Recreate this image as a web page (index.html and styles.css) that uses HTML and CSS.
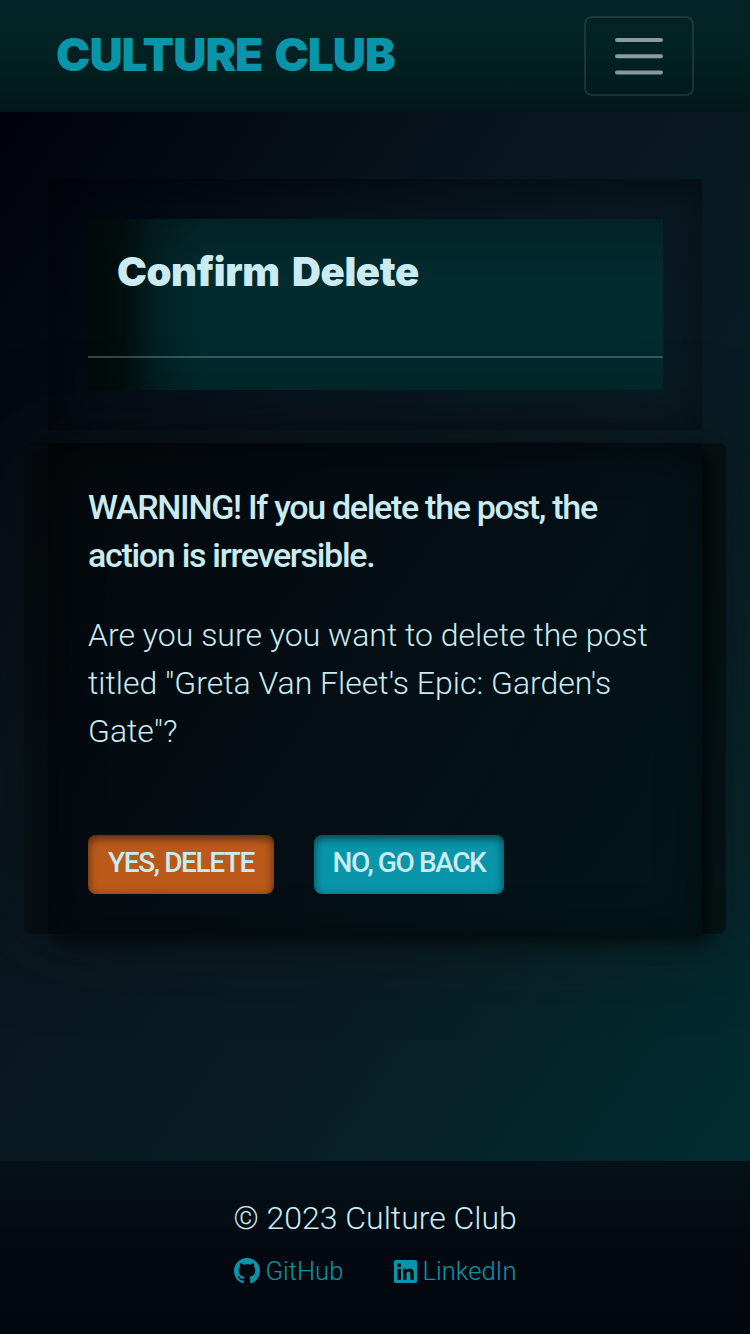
FILE: index.html
```html
<!DOCTYPE html>
<html lang="en">
<head>
<meta charset="utf-8">
<title>Culture Club</title>
<link rel="stylesheet" href="styles.css">
</head>
<body>
<header class="navbar">
  <a class="brand">CULTURE CLUB</a>
  <button class="toggler" aria-label="Toggle navigation">
    <svg width="60" height="60" viewBox="0 0 30 30"><path stroke="rgba(255,255,255,.55)" stroke-linecap="round" stroke-width="2" d="M4 7h22M4 15.100h22M4 23.200h22"/></svg>
  </button>
</header>
<main class="main">
  <section class="masthead">
    <div class="masthead-inner">
      <h1 class="title">Confirm Delete</h1>
      <hr class="rule">
    </div>
  </section>
  <section class="card">
    <div class="card-body">
      <p class="warning">WARNING! If you delete the post, the<br>action is irreversible.</p>
      <p class="question">Are you sure you want to delete the post titled "Greta Van Fleet's Epic: Garden's Gate"?</p>
      <div class="actions">
        <button class="btn btn-delete">YES, DELETE</button>
        <button class="btn btn-back">NO, GO BACK</button>
      </div>
    </div>
  </section>
</main>
<footer class="footer">
  <p class="copyright">© 2023 Culture Club</p>
  <div class="links">
    <a class="link"><svg class="github" viewBox="0 0 16 16"><path d="M8 0C3.58 0 0 3.58 0 8c0 3.54 2.29 6.53 5.47 7.59.4.07.55-.17.55-.38 0-.19-.01-.82-.01-1.49-2.01.37-2.53-.49-2.69-.94-.09-.23-.48-.94-.82-1.13-.28-.15-.68-.52-.01-.53.63-.01 1.08.58 1.23.82.72 1.21 1.87.87 2.33.66.07-.52.28-.87.51-1.07-1.78-.2-3.64-.89-3.64-3.95 0-.87.31-1.59.82-2.15-.08-.2-.36-1.02.08-2.12 0 0 .67-.21 2.2.82A7.6 7.6 0 0 1 8 3.86c.68 0 1.36.09 2 .27 1.53-1.04 2.2-.82 2.2-.82.44 1.1.16 1.92.08 2.12.51.56.82 1.27.82 2.15 0 3.07-1.87 3.75-3.65 3.95.29.25.54.73.54 1.48 0 1.07-.01 1.93-.01 2.2 0 .21.15.46.55.38A8.01 8.01 0 0 0 16 8c0-4.42-3.58-8-8-8z"/></svg><span>GitHub</span></a>
    <a class="link"><svg class="linkedin" viewBox="0 0 448 448"><path d="M416 0H31.900C14.300 0 0 14.500 0 32.300v383.400C0 433.500 14.300 448 31.900 448H416c17.600 0 32-14.500 32-32.300V32.300C448 14.500 433.600 0 416 0zM135.400 384H69V170.200h66.500V384zm-33.200-243a38.500 38.500 0 1 1 0-77 38.500 38.500 0 0 1 0 77zm282.100 243h-66.400V280c0-24.800-.5-56.700-34.500-56.700-34.600 0-39.900 27-39.900 54.900V384h-66.400V170.200h63.700v29.200h.9c8.900-16.800 30.600-34.500 62.900-34.500 67.200 0 79.700 44.300 79.700 101.900V384z"/></svg><span>LinkedIn</span></a>
  </div>
</footer>
</body>
</html>
```
FILE: styles.css
```css
* { box-sizing: border-box; }
body {
  margin: 0;
  min-height: 1334px;
  display: flex;
  flex-direction: column;
  font: 300 32px/48px Roboto, sans-serif;
  color: #caebf2;
  background: linear-gradient(125deg, #00000a 3%, #08151e 35%, #091c24 62%, #022c30 90%);
}
.navbar {
  height: 112px;
  padding: 16px 56px;
  display: flex;
  justify-content: space-between;
  align-items: flex-start;
  background: linear-gradient(#032427, #022122 50%, #021719);
}
.brand {
  font: 900 46px/76px Inter, sans-serif;
  letter-spacing: -1px;
  word-spacing: 4px;
  color: #0995a9;
  white-space: nowrap;
}
.toggler {
  width: 110px;
  height: 80px;
  padding: 0;
  display: flex;
  align-items: center;
  justify-content: center;
  border: 2px solid rgba(255, 255, 255, .1);
  border-radius: 8px;
  background: none;
}
.main { flex: 1; padding-top: 67px; }
.masthead {
  height: 251px;
  margin: 0 48px;
  padding: 40px;
  box-shadow: inset 4px 4px 48px rgba(0, 0, 0, .5);
}
.masthead-inner {
  width: 575px;
  height: 171px;
  background:
    linear-gradient(90deg, #020a0a, rgba(2, 10, 10, .9) 6%, rgba(2, 10, 10, .3) 12%, rgba(2, 10, 10, 0) 20%),
    linear-gradient(#032225, #022b2f 35%, #022b2f 75%, #02272a);
}
.title {
  height: 137px;
  margin: 0;
  padding: 29px 29px;
  font: 900 40px/48px Inter, sans-serif;
  letter-spacing: -.4px;
  word-spacing: 5px;
  white-space: nowrap;
}
.rule { margin: 0; border: 0; height: 2px; background: rgba(202, 235, 242, .25); }
.card {
  margin: 13px 24px 0;
  padding: 0 24px;
  height: 491px;
  border-radius: 8px;
  background: rgba(7, 8, 9, .6);
  box-shadow: 0 0 96px rgba(20, 18, 16, .45);
}
.card-body {
  height: 491px;
  padding: 40px;
  background: linear-gradient(125deg, #04080c, #040e14 50%, #02171a);
  box-shadow: 8px 8px 16px rgba(0, 0, 0, .6), inset 4px 4px 48px rgba(0, 0, 0, .45);
}
.warning {
  margin: 0 0 32px;
  font-size: 34px;
  font-weight: 500;
  letter-spacing: -1.3px;
  white-space: nowrap;
}
.question { margin: 0 -8px 80px 0; }
.actions { display: flex; gap: 40px; }
.btn {
  height: 59px;
  padding: 0 0 3px;
  border: 0;
  border-radius: 8px;
  font: 500 28px/56px Roboto, sans-serif;
  letter-spacing: -1.4px;
  color: #caebf2;
  white-space: nowrap;
  box-shadow: inset 0 3px 10px rgba(0, 0, 0, .6);
}
.btn-delete { width: 186px; background: #bb591b; }
.btn-back { width: 190px; background: #0995a9; }
.footer {
  height: 173px;
  padding-top: 33px;
  display: flex;
  flex-direction: column;
  align-items: center;
  background: linear-gradient(#051118, #040911 50%, #02070e);
}
.copyright { margin: 0; }
.links {
  width: 283px;
  margin-top: 10px;
  display: flex;
  justify-content: space-between;
  font-size: 25.6px;
  line-height: 38px;
  color: #0995a9;
}
.link { display: flex; align-items: center; gap: 6px; }
.link svg { fill: #0995a9; }
.github { width: 26px; height: 26px; }
.linkedin { width: 23px; height: 23px; }
```
